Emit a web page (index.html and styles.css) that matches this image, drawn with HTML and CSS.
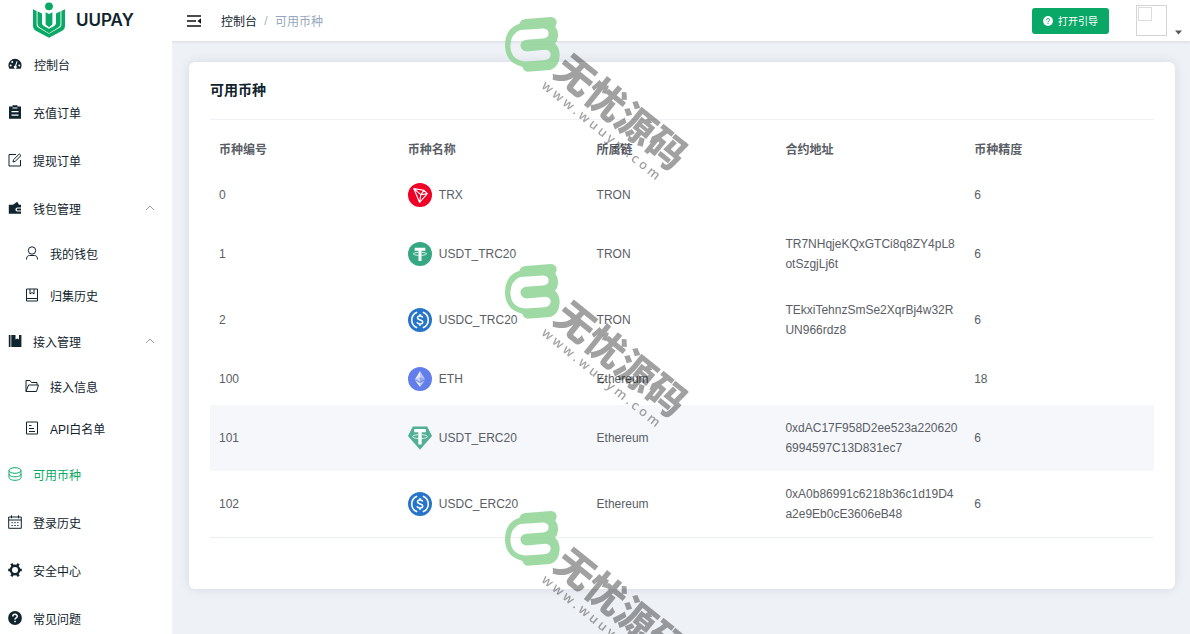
FILE: index.html
```html
<!DOCTYPE html>
<html lang="zh-CN">
<head>
<meta charset="utf-8">
<meta name="viewport" content="width=device-width, initial-scale=1">
<title>可用币种 - UUPAY</title>
<link rel="stylesheet" href="styles.css">
</head>
<body>
<svg class="defs" aria-hidden="true">
  <symbol id="usdc" viewBox="0 0 24 24">
    <circle cx="12" cy="12" r="12" fill="#2775ca"/>
    <path d="M9.2 4.2a8.3 8.3 0 0 0 0 15.6M14.8 4.2a8.3 8.3 0 0 1 0 15.6" fill="none" stroke="#fff" stroke-width="1.6"/>
    <path d="M14.6 9.7c-.2-1.200-1.200-1.800-2.600-1.800-1.500 0-2.500.7-2.500 1.900 0 2.900 5.200 1.300 5.200 4.200 0 1.300-1.100 2-2.700 2s-2.600-.7-2.800-2M12 6v1.900M12 16v2" fill="none" stroke="#fff" stroke-width="1.500"/>
  </symbol>
  <symbol id="wm-logo" viewBox="40 47 170 170">
    <path fill-rule="evenodd" fill="#8fd496" d="M86 70Q90 57 104 56L180 50Q198 52 197 68L193 79Q203 90 201 108Q200 122 192 129Q207 143 206 165Q204 201 178 208L110 213Q99 212 95 199Q46 188 43 138Q42 84 86 70ZM88 89L157 84Q173 86 173 99Q172 113 156 114L106 118Q89 121 89 136Q91 152 108 153L163 148Q180 150 179 163Q177 177 160 179L105 183Q60 180 59 136Q60 100 88 89Z"/>
  </symbol>
</svg>

<div class="app">
  <aside class="sidebar">
    <a class="brand" href="#">
      <svg width="32" height="36" viewBox="0 0 32 36" aria-hidden="true">
        <g fill="#0aa866">
          <circle cx="16" cy="4.300" r="3.900"/>
          <path d="M0 7.200 3.600 9v13.200c0 1.600.6 2.600 2 3.500L16 31.800l10.400-6.100c1.400-.9 2-1.900 2-3.500V9L32 7.200v16.600c0 2.300-.9 3.800-2.800 4.900L16 35.800 2.800 28.700C.9 27.600 0 26.100 0 23.800Z"/>
          <path d="M4.500 9.300 9 11.400v9.200c0 2 1 3 2.700 4L16 26.800l4.300-2.200c1.700-1 2.700-2 2.700-4v-9.200l4.500-2.100v12.300c0 1.900-.8 3-2.300 3.900L16 31.200l-9.200-5.700c-1.500-.9-2.300-2-2.300-3.900Z"/>
          <path d="M12.600 10.300 16 12l3.400-1.700v12.200L16 25.200l-3.400-2.700Z"/>
        </g>
      </svg>
      <span>UUPAY</span>
    </a>
    <nav class="menu">
      <a class="item item-home" href="#">
        <svg class="icon" viewBox="0 0 14 14"><path fill="currentColor" fill-rule="evenodd" d="M7 1.700A6.600 6.600 0 0 0 .4 8.300c0 1.300.4 2.500 1 3.500h11.200c.6-1 1-2.200 1-3.500A6.600 6.600 0 0 0 7 1.700ZM2.700 7.500a1 1 0 1 1 0 2 1 1 0 0 1 0-2ZM4.200 4a1 1 0 1 1 0 2 1 1 0 0 1 0-2ZM11.300 7.500a1 1 0 1 1 0 2 1 1 0 0 1 0-2ZM8.600 4.200l1 .4-1.400 4.200A1.500 1.500 0 1 1 7.100 8.500Z"/></svg>
        <span>控制台</span></a>
      <a class="item" href="#">
        <svg class="icon" viewBox="0 0 14 14"><path fill="currentColor" fill-rule="evenodd" d="M1 1.500h3.500V.3h5v1.200H13V13.700H1ZM4.500 2.500V3.500h5V2.500ZM3.500 6v1.300h7V6ZM3.500 9.500v1.300h7V9.500Z"/></svg>
        <span>充值订单</span></a>
      <a class="item" href="#">
        <svg class="icon line" viewBox="0 0 14 14"><path d="M8 1.500H1v11.500h11.500V7M5 9l.5-2.300L11.300 1l1.700 1.600-5.800 5.800Z"/></svg>
        <span>提现订单</span></a>
      <div class="group">
        <a class="item" href="#">
          <svg class="icon" viewBox="0 0 14 14"><path fill="currentColor" fill-rule="evenodd" d="M.8 3.800H5L9.200.8l1.800 3h2v2.700H9.500c-2.700 0-2.700 4 0 4H13v2.300H.8ZM9.700 7.500H13v2H9.700c-1.200 0-1.200-2 0-2Z"/></svg>
          <span>钱包管理</span>
          <svg class="chevron" viewBox="0 0 10 6"><path d="M1 5l4-4 4 4"/></svg></a>
        <a class="item sub" href="#">
          <svg class="icon line" viewBox="0 0 14 14"><circle cx="7" cy="4.500" r="3.700"/><path d="M1.500 13.500c0-2.500 1-4 3-4h5c2 0 3 1.500 3 4"/></svg>
          <span>我的钱包</span></a>
        <a class="item sub" href="#">
          <svg class="icon line" viewBox="0 0 14 14"><path d="M1.500 1h11v12h-11ZM1.500 10.500h11M5 1v5l2-1.500L9 6V1"/></svg>
          <span>归集历史</span></a>
      </div>
      <div class="group">
        <a class="item" href="#">
          <svg class="icon" viewBox="0 0 14 14"><path fill="currentColor" d="M.8 1h1.700v12H.8ZM3.300 1H7.500v4.500l1.700-1 1.800 1V1H13.400v12H3.300Z"/></svg>
          <span>接入管理</span>
          <svg class="chevron" viewBox="0 0 10 6"><path d="M1 5l4-4 4 4"/></svg></a>
        <a class="item sub" href="#">
          <svg class="icon line" viewBox="0 0 14 14"><path d="M1 12.500V1.500h4l1.500 2h5.500v2.500M1 12.500l2.500-6.500h10L11.500 12.500Z"/></svg>
          <span>接入信息</span></a>
        <a class="item sub" href="#">
          <svg class="icon line" viewBox="0 0 14 14"><path d="M1.500 1h11v12h-11ZM4 4.500h2.500M4 7.500h5M4 10.500h6"/></svg>
          <span>API白名单</span></a>
      </div>
      <a class="item active" href="#" aria-current="page">
        <svg class="icon line" viewBox="0 0 14 14"><ellipse cx="7" cy="3.500" rx="6" ry="2.800"/><path d="M1 3.500v7c0 1.600 2.700 2.800 6 2.800s6-1.200 6-2.800v-7M1 7c0 1.600 2.700 2.800 6 2.800S13 8.600 13 7"/></svg>
        <span>可用币种</span></a>
      <a class="item" href="#">
        <svg class="icon line" viewBox="0 0 14 14"><path d="M.7 2h12.600v11.300H.7ZM.7 5h12.600M3.500.3v3M10.500.3v3M3.500 7.700h1.300M6.300 7.700h1.400M9.200 7.700h1.300M3.500 10.500h1.300M6.300 10.500h1.400M9.200 10.500h1.300"/></svg>
        <span>登录历史</span></a>
      <a class="item" href="#">
        <svg class="icon" viewBox="0 0 14 14"><circle cx="7" cy="7" r="4.200" fill="none" stroke="currentColor" stroke-width="2.400"/><path d="M3.300.8 5 3M10.700.8 9 3M13.800 7h-2M10.700 13.200 9 11M3.300 13.200 5 11M.2 7h2" stroke="currentColor" stroke-width="2.600"/></svg>
        <span>安全中心</span></a>
      <a class="item" href="#">
        <svg class="icon" viewBox="0 0 14 14"><circle cx="7" cy="7" r="6.900" fill="currentColor"/><path d="M4.800 5.500C4.800 2.600 9.300 2.700 9.300 5.300 9.300 7 7 6.800 7 8.600M7 9.700v1.600" fill="none" stroke="#fff" stroke-width="1.500"/></svg>
        <span>常见问题</span></a>
    </nav>
  </aside>

  <div class="content">
    <header class="topbar">
      <button class="fold" type="button" aria-label="收起菜单">
        <svg width="14" height="12" viewBox="0 0 14 12"><path d="M0 1h14M0 6h9M0 11h14" stroke="#111" stroke-width="1.400"/><path d="M14 3.300v5.400L10.500 6Z" fill="#111"/></svg>
      </button>
      <nav class="crumbs" aria-label="breadcrumb">
        <a href="#">控制台</a><span class="slash">/</span><span class="here">可用币种</span>
      </nav>
      <button class="guide" type="button">
        <svg width="10" height="10" viewBox="0 0 10 10" aria-hidden="true"><circle cx="5" cy="5" r="4.900" fill="#fff"/><path d="M3.500 4C3.500 2 6.600 2 6.600 3.800 6.600 5 5 4.900 5 6.200M5 6.900v1" fill="none" stroke="#0aa866" stroke-width="1"/></svg>
        <span>打开引导</span>
      </button>
      <button class="user" type="button" aria-label="用户菜单">
        <span class="avatar"><span class="avatar-mark"></span></span>
        <svg class="caret" width="7" height="5" viewBox="0 0 7 5"><path d="M0 .5h7L3.500 4.500Z" fill="#555a60"/></svg>
      </button>
    </header>

    <main class="main">
      <section class="card">
        <h1 class="card-title">可用币种</h1>
        <table class="coins">
          <thead>
            <tr><th>币种编号</th><th>币种名称</th><th>所属链</th><th>合约地址</th><th>币种精度</th></tr>
          </thead>
          <tbody>
            <tr>
              <td>0</td>
              <td><span class="coin"><svg viewBox="0 0 24 24"><circle cx="12" cy="12" r="12" fill="#ef0027"/><path d="M5.800 5.500 16 7.400l3.300 3.200L11.600 19.500ZM5.800 5.500l7 6.200-1.200 7.800M12.800 11.700 16 7.400M12.800 11.700l6.500-1.100" fill="none" stroke="#fff" stroke-width="1.100" stroke-linejoin="round"/></svg>TRX</span></td>
              <td>TRON</td><td></td><td>6</td>
            </tr>
            <tr>
              <td>1</td>
              <td><span class="coin"><svg viewBox="0 0 24 24"><circle cx="12" cy="12" r="12" fill="#35a883"/><path d="M6.700 5.800h10.600v2.900h-3.800V19h-3V8.700H6.700Z" fill="#fff"/><path d="M10.500 10.400C3.500 10.700 3.500 13.300 12 13.300s8.500-2.600 1.500-2.900" fill="none" stroke="#fff" stroke-width=".8"/></svg>USDT_TRC20</span></td>
              <td>TRON</td><td>TR7NHqjeKQxGTCi8q8ZY4pL8otSzgjLj6t</td><td>6</td>
            </tr>
            <tr>
              <td>2</td>
              <td><span class="coin"><svg><use href="#usdc"/></svg>USDC_TRC20</span></td>
              <td>TRON</td><td>TEkxiTehnzSmSe2XqrBj4w32RUN966rdz8</td><td>6</td>
            </tr>
            <tr>
              <td>100</td>
              <td><span class="coin"><svg viewBox="0 0 24 24"><circle cx="12" cy="12" r="12" fill="#627eea"/><path d="M12 4v8.800L7 12.200Z" fill="#e8ecfc"/><path d="M12 4l5 8.200-5 .6Z" fill="#c0cbf7"/><path d="M12 9.900v5.200l-5-2.900Z" fill="#c0cbf7"/><path d="M12 9.900l5 2.300-5 2.900Z" fill="#92a5f0"/><path d="M12 16v4l-5-6.800Z" fill="#e8ecfc"/><path d="M12 16v4l5-6.800Z" fill="#c0cbf7"/></svg>ETH</span></td>
              <td>Ethereum</td><td></td><td>18</td>
            </tr>
            <tr class="hovered">
              <td>101</td>
              <td><span class="coin"><svg viewBox="0 0 24 24"><path d="M4.800.5h14.400L24 10 12 23.800 0 10Z" fill="#50af95"/><path d="M6.200 3h11.600v3.200h-4.100V18.500h-3.400V6.200H6.200Z" fill="#fff"/><path d="M10.300 8.700C2.500 9 2.500 12.600 12 12.600s9.500-3.600 1.700-3.900" fill="none" stroke="#fff" stroke-width=".8"/></svg>USDT_ERC20</span></td>
              <td>Ethereum</td><td>0xdAC17F958D2ee523a2206206994597C13D831ec7</td><td>6</td>
            </tr>
            <tr>
              <td>102</td>
              <td><span class="coin"><svg><use href="#usdc"/></svg>USDC_ERC20</span></td>
              <td>Ethereum</td><td>0xA0b86991c6218b36c1d19D4a2e9Eb0cE3606eB48</td><td>6</td>
            </tr>
          </tbody>
        </table>
      </section>
    </main>
  </div>

  <div class="watermarks" aria-hidden="true">
    <div class="wm wm-1"><svg class="wm-logo"><use href="#wm-logo"/></svg><div class="wm-text"><span class="wm-name">无忧源码</span><span class="wm-url">www.wuuym.com</span></div></div>
    <div class="wm wm-2"><svg class="wm-logo"><use href="#wm-logo"/></svg><div class="wm-text"><span class="wm-name">无忧源码</span><span class="wm-url">www.wuuym.com</span></div></div>
    <div class="wm wm-3"><svg class="wm-logo"><use href="#wm-logo"/></svg><div class="wm-text"><span class="wm-name">无忧源码</span><span class="wm-url">www.wuuym.com</span></div></div>
  </div>
</div>
</body>
</html>
```

FILE: styles.css
```css
* { box-sizing: border-box; }

body {
  margin: 0;
  font-family: "Liberation Sans", "Noto Sans CJK SC", sans-serif;
  font-size: 12px;
  color: #10242e;
  background: #eef1f6;
}

a { color: inherit; text-decoration: none; }
button { padding: 0; border: 0; background: none; font: inherit; cursor: pointer; }
.defs { display: none; }

.app {
  position: relative;
  display: flex;
  height: 100vh;
  overflow: hidden;
}

/* sidebar */
.sidebar {
  flex: 0 0 172px;
  background: #fff;
  overflow-y: auto;
  scrollbar-width: none;
}
.brand {
  display: flex;
  align-items: center;
  gap: 11px;
  height: 40px;
  padding-left: 33px;
  font: 600 17px Inter, sans-serif;
}
.item {
  display: flex;
  align-items: center;
  gap: 11px;
  height: 48px;
  padding: 0 17px 0 8px;
}
.item-home { gap: 12px; }
.icon { flex: none; width: 14px; height: 14px; }
.line { fill: none; stroke: currentColor; stroke-width: 1; }
.group { padding-bottom: 1px; }
.sub { height: 42px; padding-left: 25px; }
.active { color: #0aa866; }
.chevron {
  width: 10px;
  height: 6px;
  margin-left: auto;
  fill: none;
  stroke: #9a9fa5;
}

/* top bar */
.content {
  flex: 1;
  min-width: 0;
  overflow-y: auto;
}
.topbar {
  display: flex;
  align-items: center;
  height: 41px;
  padding: 0 8px 0 15px;
  background: #fff;
  box-shadow: 0 1px 3px rgba(0, 21, 41, .1);
}
.fold { display: flex; }
.crumbs { display: flex; align-items: center; margin-left: 20px; }
.slash { width: 18px; text-align: center; color: #a9afba; }
.here { color: #97a8be; }
.guide {
  display: flex;
  align-items: center;
  justify-content: center;
  gap: 5px;
  width: 77px;
  height: 26px;
  margin-left: auto;
  border-radius: 3px;
  background: #0aa866;
  color: #fff;
  font-size: 10px;
}
.user { display: flex; align-items: flex-end; gap: 8px; margin-left: 27px; }
.avatar {
  width: 31px;
  height: 31px;
  padding: 1px;
  border: 1px solid #d4d4d4;
}
.avatar-mark { display: block; width: 14px; height: 14px; border: 1px solid #dcdcdc; }
.caret { margin-bottom: 1px; }

/* card */
.main { padding: 21px 15px 45px 17px; }
.card {
  padding: 0 21px 51px;
  border-radius: 6px;
  background: #fff;
  box-shadow: 0 0 12px rgba(0, 21, 41, .1);
}
.card-title {
  margin: 0 0 9px;
  border-bottom: 1px solid #f0f1f4;
  font-size: 14px;
  line-height: 57px;
}
.coins {
  width: 100%;
  border-collapse: collapse;
  table-layout: fixed;
  border-bottom: 1px solid #ebeef5;
  color: #5a5e66;
  line-height: 20px;
}
.coins th, .coins td {
  height: 52px;
  padding: 0 7px 0 9px;
  text-align: left;
  word-break: break-all;
}
.coins th { height: 40px; padding-top: 2px; }
.coins td { padding-top: 13px; padding-bottom: 13px; }
.hovered { background: #f5f7fb; }
.coin { display: flex; align-items: center; gap: 7px; }
.coin svg { flex: none; width: 24px; height: 24px; }

/* watermark */
.watermarks {
  position: absolute;
  inset: 0;
  overflow: hidden;
  pointer-events: none;
}
.wm { position: absolute; left: 504px; }
.wm-1 { top: 16px; }
.wm-2 { top: 263px; }
.wm-3 { top: 510px; }
.wm-logo { display: block; width: 57px; height: 57px; opacity: .85; }
.wm-text {
  position: absolute;
  left: 70px;
  top: 30px;
  display: grid;
  transform: rotate(39deg);
  transform-origin: 0 0;
  color: #000;
  opacity: .37;
  white-space: nowrap;
}
.wm-name { font: 900 39px/39px "Noto Sans CJK SC", sans-serif; }
.wm-url { font: 600 13px/18px "Open Sans", sans-serif; letter-spacing: 3px; }
```
